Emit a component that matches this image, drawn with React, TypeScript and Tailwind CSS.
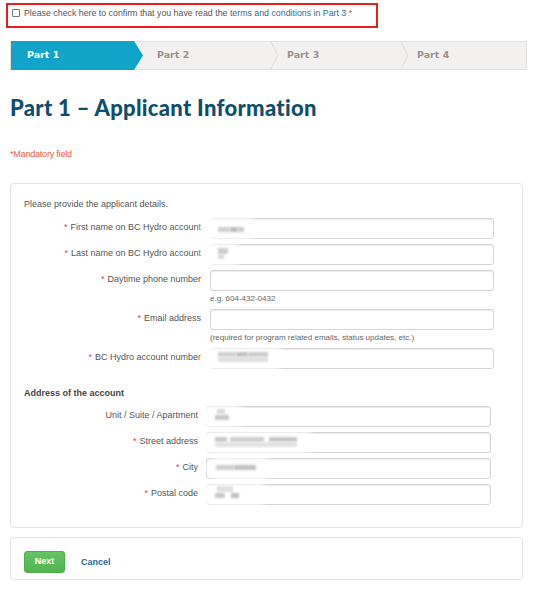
import React from "react";

const steps = ["Part 1", "Part 2", "Part 3", "Part 4"];

// blurred placeholder over prefilled values
function Smudge({
  left,
  width,
  blocks,
}: {
  left: number;
  width: number;
  blocks: { x: number; y: number; w: number; h: number; c: string }[];
}) {
  return (
    <span
      className="pointer-events-none absolute top-[-1px] bottom-[-1px]"
      style={{ left, width }}
    >
      <span className="absolute inset-0 rounded-full bg-white blur-[2px]" />
      {blocks.map((b, i) => (
        <span
          key={i}
          className="absolute blur-[0.8px]"
          style={{ left: b.x, top: b.y, width: b.w, height: b.h, backgroundColor: b.c }}
        />
      ))}
    </span>
  );
}

function Input({ children }: { children?: React.ReactNode }) {
  return (
    <div className="relative h-[21px] flex-1 rounded-[3px] border border-[#d4d4d4] bg-white shadow-[inset_0_1px_1px_rgba(0,0,0,0.08)]">
      {children}
    </div>
  );
}

function Field({
  label,
  required,
  hint,
  labelW,
  gap,
  children,
}: {
  label: string;
  required?: boolean;
  hint?: string;
  labelW: string;
  gap: string;
  children?: React.ReactNode;
}) {
  return (
    <div>
      <div className={`flex items-center ${gap}`}>
        <label className={`${labelW} shrink-0 text-right text-[9px] text-[#555]`}>
          {required && <span className="mr-[3px] text-[#e0463a]">*</span>}
          {label}
        </label>
        <Input>{children}</Input>
      </div>
      {hint && (
        <div className={`flex ${gap}`}>
          <div className={`${labelW} shrink-0`} />
          <p className="mt-[2px] text-[8px] leading-[12px] text-[#666]">{hint}</p>
        </div>
      )}
    </div>
  );
}

export default function App() {
  return (
    <div className="min-h-[594px] w-[554px] bg-white font-['Liberation_Sans',Arial,sans-serif] text-[#555]">
      <div className="pt-[3px] pl-[6px]">
        <div className="flex h-[25px] w-[372px] items-start gap-[4px] border-2 border-[#ee1c1c] pt-[3px] pl-[4px] text-[8.8px] leading-[11px]">
          <span className="mt-[1px] h-[8px] w-[8px] rounded-[1px] border border-[#777] bg-white" />
          <span className="text-[#555]">
            Please check here to confirm that you have read the{" "}
            <span className="text-[#2b6d94]">terms and conditions in Part 3</span>{" "}
            <span className="text-[#e0463a]">*</span>
          </span>
        </div>
      </div>

      {/* progress steps */}
      <div className="ml-[10px] mt-[13px] flex h-[29px] w-[517px] border border-[#e3e1df] bg-[#f2f1f0]">
        {steps.map((s, i) => (
          <div key={s} className={`relative h-full ${i === 3 ? "flex-1" : "w-[130px]"}`}>
            {i === 0 && (
              <div className="absolute inset-y-[-1px] left-0 w-[132px] bg-[#12a3c9] [clip-path:polygon(0_0,calc(100%_-_9px)_0,100%_50%,calc(100%_-_9px)_100%,0_100%)]" />
            )}
            <span
              className={`relative flex h-full items-center pl-[16px] font-['DejaVu_Sans',sans-serif] text-[9.5px] font-bold ${
                i === 0 ? "text-white" : "text-[#9a928b]"
              }`}
            >
              {s}
            </span>
            {i > 0 && i < 3 && (
              <svg
                className="absolute top-0 right-[-8px] h-full w-[9px]"
                viewBox="0 0 9 28"
                preserveAspectRatio="none"
              >
                <path d="M1 0 L8 14 L1 28" fill="none" stroke="#dcd9d6" strokeWidth="1" />
              </svg>
            )}
          </div>
        ))}
      </div>

      <h1 className="ml-[10px] mt-[24px] font-['Lato',sans-serif] text-[22px] font-black leading-[28px] tracking-[0.3px] text-[#0f4e6d]">
        Part 1 – Applicant Information
      </h1>

      <p className="ml-[10px] mt-[26px] text-[9px] tracking-[-0.2px] text-[#ef5a3f]">*Mandatory field</p>

      {/* applicant form */}
      <div className="ml-[10px] mt-[21px] h-[345px] w-[513px] rounded-[4px] border border-[#e4e4e4] bg-white pl-[13px] pt-[14px]">
        <p className="text-[9px] leading-[12px] text-[#555]">Please provide the applicant details.</p>

        <div className="mt-[8px] flex w-[470px] flex-col">
          <Field label="First name on BC Hydro account" required labelW="w-[177px]" gap="gap-[9px]">
            <Smudge
              left={-10}
              width={58}
              blocks={[
                { x: 17, y: 9, w: 12, h: 5, c: "#cfcfcf" },
                { x: 29, y: 9, w: 8, h: 5, c: "#bdbdbd" },
                { x: 37, y: 9, w: 6, h: 5, c: "#cacaca" },
              ]}
            />
          </Field>
          <div className="mt-[5px]">
            <Field label="Last name on BC Hydro account" required labelW="w-[177px]" gap="gap-[9px]">
              <Smudge
                left={-10}
                width={42}
                blocks={[
                  { x: 17, y: 4, w: 10, h: 6, c: "#cdcdcd" },
                  { x: 17, y: 10, w: 6, h: 5, c: "#dadada" },
                ]}
              />
            </Field>
          </div>
          <div className="mt-[5px]">
            <Field
              label="Daytime phone number"
              required
              hint="e.g. 604-432-0432"
              labelW="w-[177px]"
              gap="gap-[9px]"
            />
          </div>
          <div className="mt-[4px]">
            <Field
              label="Email address"
              required
              hint="(required for program related emails, status updates, etc.)"
              labelW="w-[177px]"
              gap="gap-[9px]"
            />
          </div>
          <div className="mt-[4px]">
            <Field label="BC Hydro account number" required labelW="w-[177px]" gap="gap-[9px]">
              <Smudge
                left={-10}
                width={84}
                blocks={[
                  { x: 17, y: 4, w: 18, h: 5, c: "#d0d0d0" },
                  { x: 35, y: 4, w: 12, h: 5, c: "#c2c2c2" },
                  { x: 47, y: 4, w: 20, h: 5, c: "#cbcbcb" },
                  { x: 17, y: 9, w: 50, h: 5, c: "#e0e0e0" },
                ]}
              />
            </Field>
          </div>
        </div>

        <p className="mt-[18px] text-[9px] font-bold leading-[12px] text-[#444]">Address of the account</p>

        <div className="mt-[7px] flex w-[467px] flex-col gap-[5px]">
          <Field label="Unit / Suite / Apartment" labelW="w-[174px]" gap="gap-[8px]">
            <Smudge
              left={-6}
              width={45}
              blocks={[
                { x: 16, y: 3, w: 8, h: 5, c: "#dadada" },
                { x: 14, y: 9, w: 14, h: 5, c: "#c8c8c8" },
              ]}
            />
          </Field>
          <Field label="Street address" required labelW="w-[174px]" gap="gap-[8px]">
            <Smudge
              left={-6}
              width={115}
              blocks={[
                { x: 14, y: 5, w: 12, h: 5, c: "#c8c8c8" },
                { x: 29, y: 5, w: 34, h: 5, c: "#cfcfcf" },
                { x: 68, y: 5, w: 28, h: 5, c: "#c6c6c6" },
                { x: 14, y: 10, w: 82, h: 5, c: "#e2e2e2" },
              ]}
            />
          </Field>
          <Field label="City" required labelW="w-[174px]" gap="gap-[8px]">
            <Smudge
              left={-1}
              width={68}
              blocks={[
                { x: 10, y: 7, w: 18, h: 5, c: "#cfcfcf" },
                { x: 28, y: 7, w: 22, h: 5, c: "#c2c2c2" },
              ]}
            />
          </Field>
          <Field label="Postal code" required labelW="w-[174px]" gap="gap-[8px]">
            <Smudge
              left={-6}
              width={68}
              blocks={[
                { x: 16, y: 2, w: 16, h: 6, c: "#e0e0e0" },
                { x: 14, y: 9, w: 10, h: 5, c: "#c8c8c8" },
                { x: 30, y: 9, w: 8, h: 5, c: "#c0c0c0" },
              ]}
            />
          </Field>
        </div>
      </div>

      {/* actions */}
      <div className="ml-[10px] mt-[9px] flex h-[43px] w-[513px] items-start gap-[16px] rounded-[4px] border border-[#e4e4e4] bg-white pl-[13px] pt-[13px]">
        <button className="h-[22px] w-[41px] rounded-[3px] border border-[#4cae4c] bg-gradient-to-b from-[#62c462] to-[#51b451] text-[9px] font-bold text-white">
          Next
        </button>
        <button className="mt-[5px] text-[9px] font-bold text-[#1f6b9a]">Cancel</button>
      </div>
    </div>
  );
}
